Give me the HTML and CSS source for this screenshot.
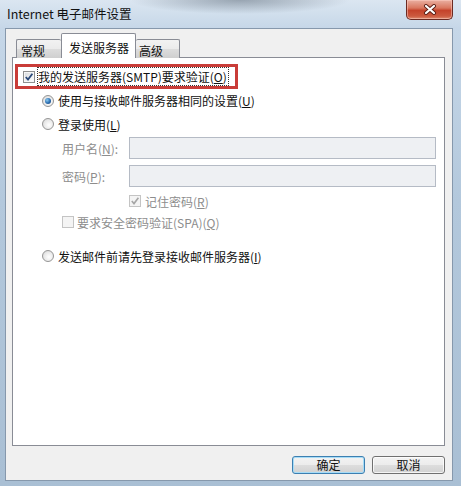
FILE: index.html
```html
<!DOCTYPE html>
<html lang="zh-CN">
<head>
<meta charset="utf-8">
<title>Internet 电子邮件设置</title>
<link rel="stylesheet" href="styles.css">
</head>
<body>
<div class="window">
  <div class="titlebar">
    <span class="title">Internet 电子邮件设置</span>
    <div class="close">
      <svg width="14" height="11" viewBox="0 0 14 11">
        <path d="M3 2 L11 9 M11 2 L3 9" stroke="#5a1d14" stroke-width="4" stroke-linecap="round" fill="none"/>
        <path d="M3 2 L11 9 M11 2 L3 9" stroke="#ffffff" stroke-width="2.2" stroke-linecap="round" fill="none"/>
      </svg>
    </div>
  </div>
  <div class="client">
    <div class="tabs">
      <div class="tab tab-general">常规</div>
      <div class="tab tab-active">发送服务器</div>
      <div class="tab tab-adv">高级</div>
    </div>
    <div class="panel">
      <div class="highlight">
        <span class="check">
          <svg width="10" height="10" viewBox="0 0 10 10"><path d="M1.8 5 L4 7.6 L8.4 1.8" stroke="#2b4a7a" stroke-width="1.8" fill="none"/></svg>
        </span>
        <span class="focus">我的发送服务器(SMTP)要求验证(<u>O</u>)</span>
      </div>
      <div class="row row-r1"><span class="radio selected"></span><span class="label">使用与接收邮件服务器相同的设置(<u>U</u>)</span></div>
      <div class="row row-r2"><span class="radio"></span><span class="label">登录使用(<u>L</u>)</span></div>
      <div class="row row-field">
        <span class="field-label disabled">用户名(<u>N</u>):</span>
        <span class="input"></span>
      </div>
      <div class="row row-field row-pass">
        <span class="field-label disabled">密码(<u>P</u>):</span>
        <span class="input"></span>
      </div>
      <div class="row row-small row-remember">
        <span class="check check-disabled">
          <svg width="10" height="10" viewBox="0 0 10 10"><path d="M1.8 5 L4 7.6 L8.4 1.8" stroke="#a6a6a6" stroke-width="1.6" fill="none"/></svg>
        </span>
        <span class="label disabled">记住密码(<u>R</u>)</span>
      </div>
      <div class="row row-small row-spa">
        <span class="check check-disabled"></span>
        <span class="label disabled">要求安全密码验证(SPA)(<u>Q</u>)</span>
      </div>
      <div class="row row-r3"><span class="radio"></span><span class="label">发送邮件前请先登录接收邮件服务器(<u>I</u>)</span></div>
    </div>
    <div class="buttons">
      <button class="btn btn-default">确定</button>
      <button class="btn">取消</button>
    </div>
  </div>
</div>
</body>
</html>
```
FILE: styles.css
```css
* { box-sizing: border-box; }
html, body { margin: 0; padding: 0; }
body {
  font-family: "Noto Sans CJK SC", "Noto Sans", sans-serif;
  font-size: 12px;
  color: #111;
  background: #b5c9dc;
}
u { text-decoration: underline; text-underline-offset: 1px; }

.window {
  width: 461px;
  height: 486px;
  display: flex;
  flex-direction: column;
  padding: 0 8px 5px 5px;
  background:
    radial-gradient(ellipse 110px 14px at 240px 0px, rgba(70, 85, 100, 0.45), rgba(70, 85, 100, 0) 100%),
    linear-gradient(to bottom, #dbe6f1 0px, #c6d7e8 28px, #b3c8dc 200px, #a9bfd4 486px);
}

.titlebar {
  height: 28px;
  flex: none;
  display: flex;
  justify-content: space-between;
  align-items: flex-start;
}
.title {
  margin-top: 5px;
  padding-left: 2px;
  font-size: 12.5px;
  line-height: 18px;
  color: #111;
}
.close {
  width: 47px;
  height: 20px;
  display: flex;
  align-items: center;
  justify-content: center;
  border: 1px solid #6b2a22;
  border-top: none;
  border-radius: 0 0 5px 5px;
  background: linear-gradient(to bottom, #eab0a2 0%, #d9775f 42%, #c5432b 55%, #cc5a3f 85%, #de8d72 100%);
  box-shadow: inset 0 0 0 1px rgba(255, 210, 200, 0.5);
}

.client {
  flex: 1;
  display: flex;
  flex-direction: column;
  background: #f0f0f0;
  border: 1px solid #8698ac;
  padding: 5px 7px 5px 6px;
}

.tabs {
  height: 24px;
  flex: none;
  display: flex;
  align-items: flex-end;
  margin-bottom: -1px;
  position: relative;
  z-index: 1;
}
.tab {
  height: 19px;
  line-height: 17px;
  padding-top: 2px;
  border: 1px solid #898c95;
  border-bottom: none;
  border-radius: 2px 2px 0 0;
  background: linear-gradient(to bottom, #f2f2f2 0%, #ebebeb 50%, #dddddd 50%, #cfcfcf 100%);
  white-space: nowrap;
}
.tab-general { margin-left: 4px; width: 45px; padding-left: 4px; border-right: none; }
.tab-active {
  width: 75px;
  height: 25px;
  padding-left: 7px;
  padding-top: 5px;
  background: #ffffff;
}
.tab-adv { width: 44px; padding-left: 3px; border-left: none; }

.panel {
  height: 389px;
  flex: none;
  background: #ffffff;
  border: 1px solid #898c95;
  display: flex;
  flex-direction: column;
}

.highlight {
  margin: 6px 0 0 2px;
  width: 223px;
  height: 25px;
  border: 3px solid #c93c38;
  display: flex;
  align-items: center;
  padding-left: 5px;
}
.focus {
  margin-left: 2px;
  height: 19px;
  line-height: 17px;
  padding: 0 1px 0 0;
  border: 1px dotted #333;
  white-space: nowrap;
}

.check {
  width: 12px;
  height: 12px;
  flex: none;
  display: flex;
  align-items: center;
  justify-content: center;
  border: 1px solid #8e8f8f;
  background: linear-gradient(135deg, #d5d8dc 0%, #f0f1f2 60%, #ffffff 100%);
  box-shadow: inset 0 0 0 1px #f6f6f6;
}
.check-disabled {
  border-color: #c4c4c4;
  background: #f4f4f4;
  box-shadow: none;
}

.radio {
  width: 12px;
  height: 12px;
  flex: none;
  border-radius: 50%;
  border: 1px solid #959595;
  background: radial-gradient(circle at 60% 60%, #ffffff 0%, #e9e9e9 55%, #cfcfcf 100%);
  display: flex;
  align-items: center;
  justify-content: center;
}
.radio.selected::after {
  content: "";
  width: 6px;
  height: 6px;
  border-radius: 50%;
  background: radial-gradient(circle at 35% 35%, #8ccbf0 0%, #2a6cb0 55%, #173f73 100%);
}

.row {
  display: flex;
  align-items: center;
  white-space: nowrap;
  line-height: 17px;
}
.label { margin-left: 4px; }
.row-r1 { height: 23px; margin-left: 29px; }
.row-r2 { height: 24px; margin-left: 29px; }
.row-field { height: 24px; margin-left: 49px; }
.row-pass { margin-top: 4px; }
.field-label { width: 67px; }
.input {
  width: 307px;
  height: 22px;
  border: 1px solid #b5bbc5;
  background: #eef0f3;
}
.row-small { height: 20px; }
.row-remember { margin-top: 3px; margin-left: 116px; }
.row-spa { margin-top: 1px; margin-left: 49px; }
.row-spa .label { margin-left: 3px; }
.row-r3 { height: 24px; margin-top: 12px; margin-left: 29px; }

.disabled { color: #8d8d8d; }

.buttons {
  margin-top: 10px;
  height: 18px;
  flex: none;
  display: flex;
  justify-content: flex-end;
  gap: 7px;
}
.btn {
  width: 73px;
  height: 18px;
  margin: 0;
  padding: 0;
  font-family: inherit;
  font-size: 12px;
  line-height: 16px;
  color: #111;
  border: 1px solid #707070;
  border-radius: 3px;
  background: linear-gradient(to bottom, #f3f3f3 0%, #ececec 50%, #dedede 50%, #d2d2d2 100%);
  box-shadow: inset 0 0 0 1px rgba(255, 255, 255, 0.75);
}
.btn-default {
  border-color: #3c7fb1;
  box-shadow: inset 0 0 0 1px #a6dcf7;
}
```
